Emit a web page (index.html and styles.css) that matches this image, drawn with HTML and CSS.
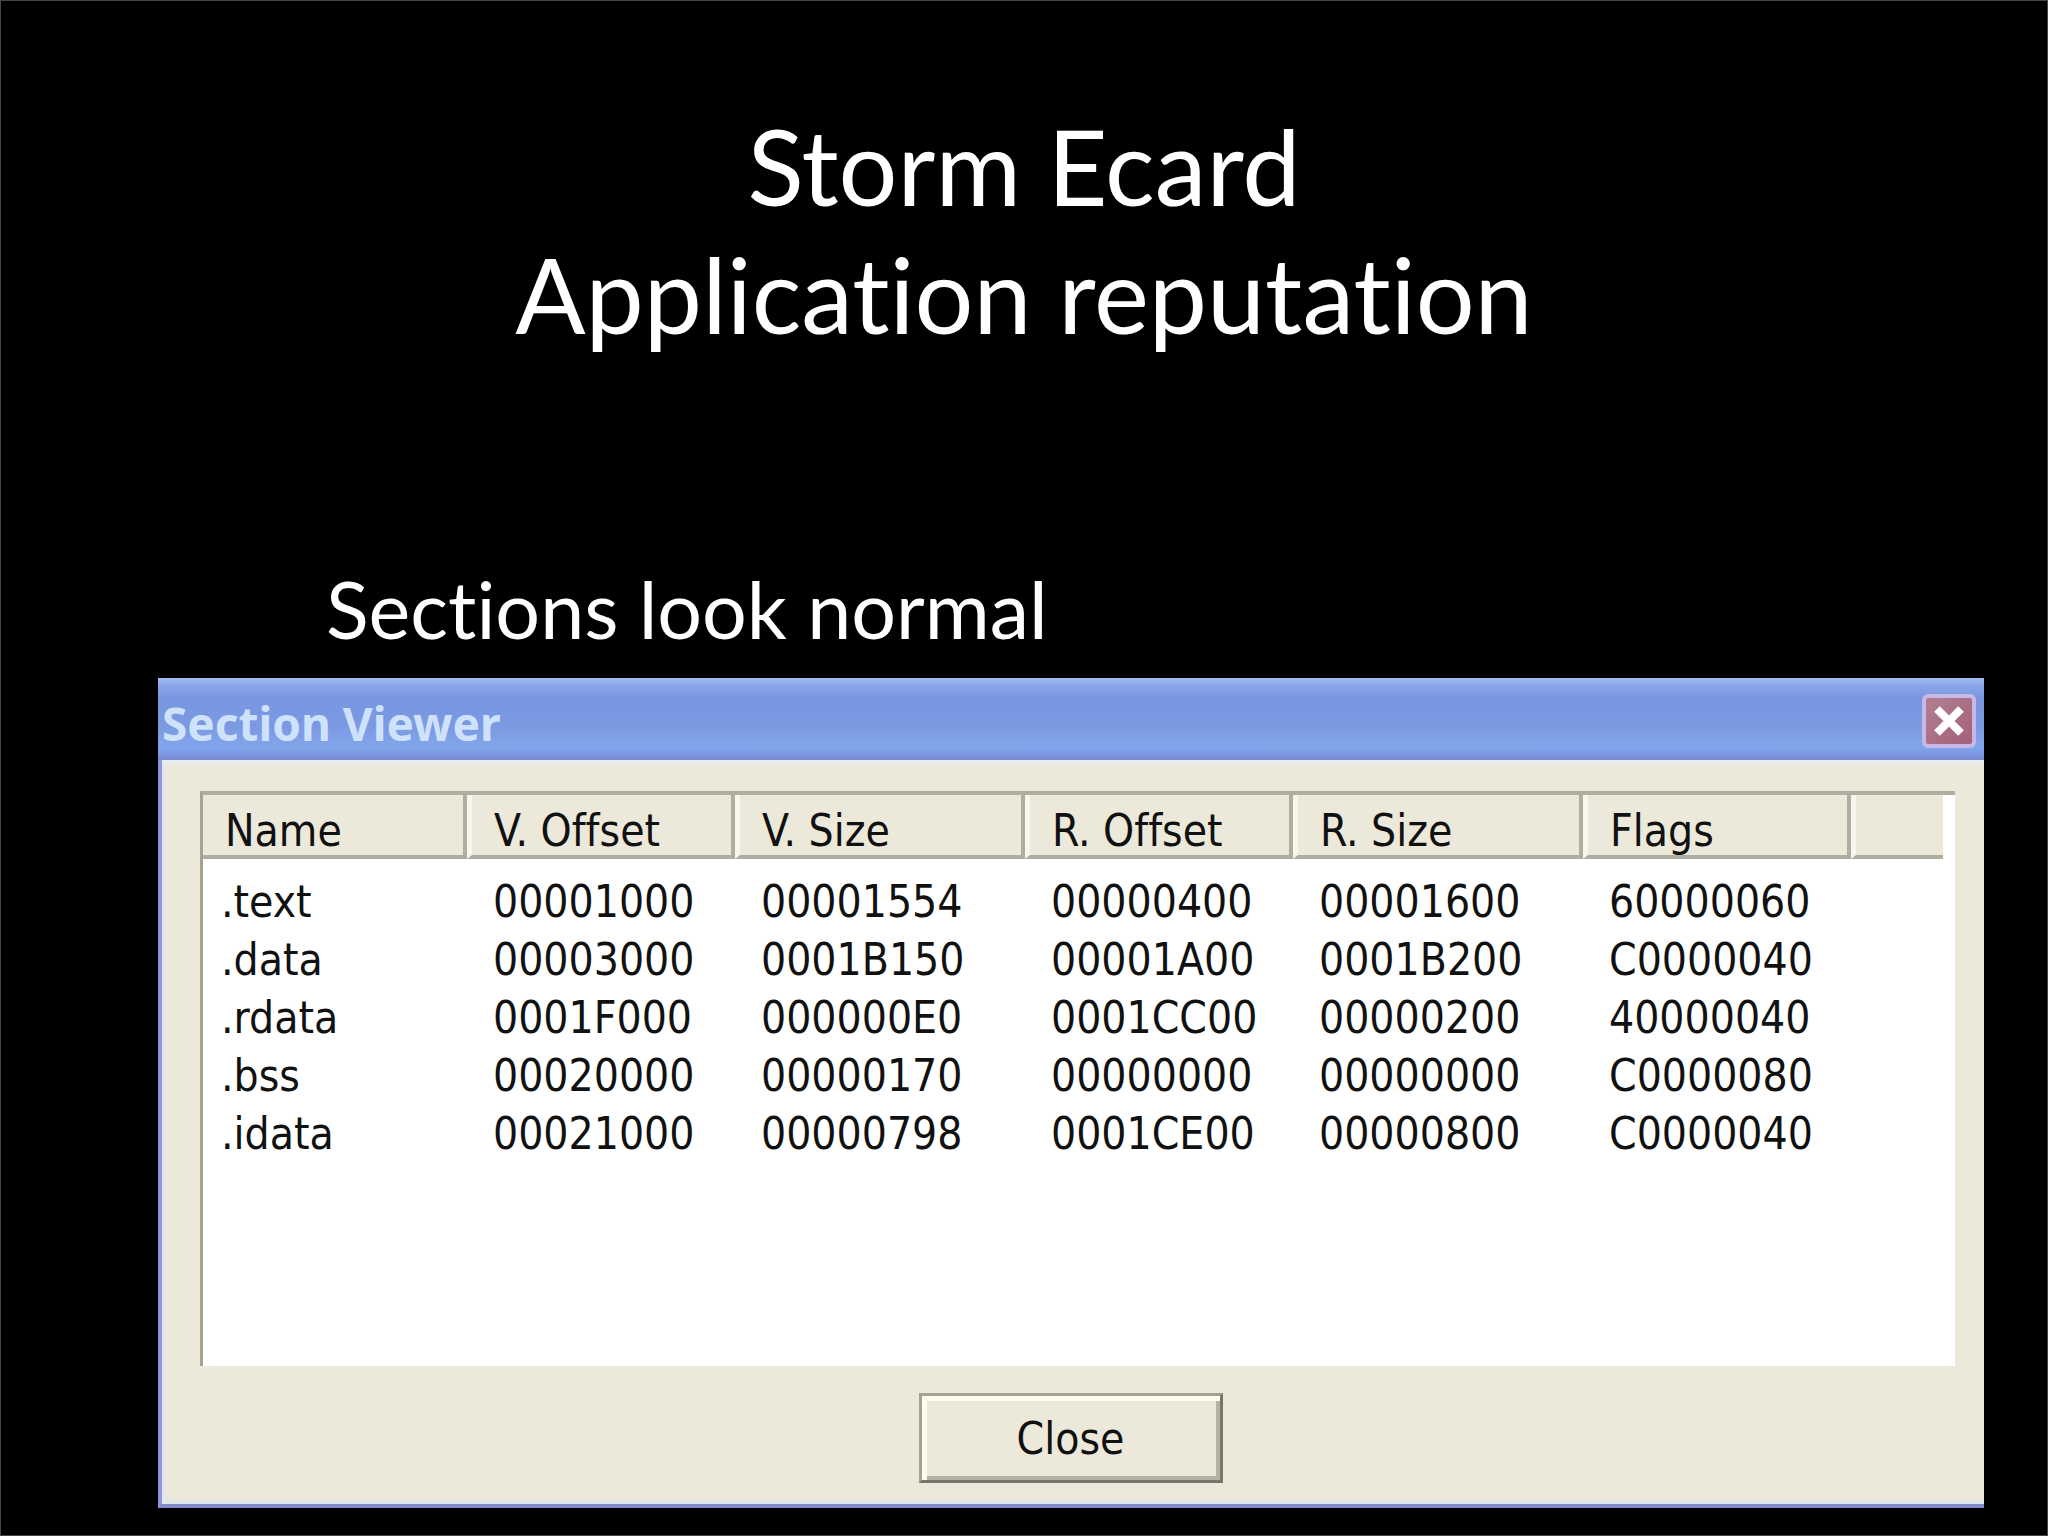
FILE: index.html
```html
<!DOCTYPE html>
<html lang="en">
<head>
<meta charset="utf-8">
<title>Storm Ecard</title>
<link rel="stylesheet" href="styles.css">
</head>
<body>
<main class="slide">
  <h1 class="slide-title">Storm Ecard<br>Application reputation</h1>
  <p class="slide-text">Sections look normal</p>
  <section class="window" aria-labelledby="window-title">
    <header class="titlebar">
      <h2 class="titlebar-text" id="window-title">Section Viewer</h2>
      <button class="titlebar-close" type="button" aria-label="Close window">
        <svg class="cross" viewBox="0 0 32 32" aria-hidden="true"><path d="M4 4L28 28M28 4L4 28"/></svg>
      </button>
    </header>
    <div class="window-body">
      <div class="list">
        <table class="sections">
          <colgroup>
            <col class="col-first"><col class="col-narrow"><col class="col-wide"><col class="col-narrow"><col class="col-wide"><col class="col-narrow"><col>
          </colgroup>
          <thead>
            <tr><th scope="col">Name</th><th scope="col">V. Offset</th><th scope="col">V. Size</th><th scope="col">R. Offset</th><th scope="col">R. Size</th><th scope="col">Flags</th><td></td></tr>
          </thead>
          <tbody>
            <tr><td>.text</td><td>00001000</td><td>00001554</td><td>00000400</td><td>00001600</td><td>60000060</td><td></td></tr>
            <tr><td>.data</td><td>00003000</td><td>0001B150</td><td>00001A00</td><td>0001B200</td><td>C0000040</td><td></td></tr>
            <tr><td>.rdata</td><td>0001F000</td><td>000000E0</td><td>0001CC00</td><td>00000200</td><td>40000040</td><td></td></tr>
            <tr><td>.bss</td><td>00020000</td><td>00000170</td><td>00000000</td><td>00000000</td><td>C0000080</td><td></td></tr>
            <tr><td>.idata</td><td>00021000</td><td>00000798</td><td>0001CE00</td><td>00000800</td><td>C0000040</td><td></td></tr>
          </tbody>
        </table>
      </div>
      <button class="close-button" type="button">Close</button>
    </div>
  </section>
</main>
</body>
</html>
```
FILE: styles.css
```css
* {
  box-sizing: border-box;
}

body {
  margin: 0;
  background: #000;
}

.slide {
  min-height: 100vh;
  padding: 101px 63px 26px 157px;
  border: 1px solid #474747;
  background: #000;
  color: #fff;
  font-family: Lato, "Gill Sans", sans-serif;
  font-variant-ligatures: none;
}

.slide-title {
  margin: 0 94px 0 0;
  font-size: 104px;
  font-weight: 400;
  line-height: 128px;
  text-align: center;
}

.slide-text {
  margin: 208px 0 26px 168px;
  font-size: 79px;
  line-height: 86px;
}

.window {
  border-bottom: 4px solid #838bc8;
  border-left: 4px solid #8f97d6;
  background: #ece9da;
  color: #111;
  font-family: "DejaVu Sans Condensed", "DejaVu Sans", Tahoma, sans-serif;
  font-size: 44px;
}

.titlebar {
  display: flex;
  align-items: center;
  justify-content: space-between;
  height: 82px;
  margin-left: -4px;
  padding: 0 8px 0 4px;
  background: linear-gradient(#a0bcf3 0, #8aa6e8 8px, #7996e0 20px, #7b9ae2 50px, #81a6ec 70px, #7b93df 78px, #8088cf 82px);
}

.titlebar-text {
  margin: 8px 0 0;
  color: #cfe2fb;
  font-family: "Noto Sans", Tahoma, sans-serif;
  font-size: 46px;
  font-weight: 700;
  line-height: 58px;
}

.titlebar-close {
  display: grid;
  place-items: center;
  width: 54px;
  height: 54px;
  margin-top: 4px;
  padding: 0;
  border: 4px solid #c8b8e8;
  border-radius: 6px;
  background: linear-gradient(135deg, #b08090, #a4607a);
}

.cross {
  width: 32px;
  height: 32px;
  fill: none;
  stroke: #fff;
  stroke-width: 8;
}

.window-body {
  display: flex;
  flex-direction: column;
  align-items: center;
  padding: 27px 29px 17px 34px;
  border-top: 4px solid #e8ecf0;
  border-left: 4px solid #e3e6f0;
  border-bottom: 4px solid #dfe8e8;
}

.list {
  align-self: stretch;
  height: 575px;
  padding-right: 12px;
  border-top: 4px solid #b0ae9e;
  border-left: 3px solid #a5a394;
  background: #fff;
}

.sections {
  width: 100%;
  border-collapse: separate;
  border-spacing: 0;
  table-layout: fixed;
}

.col-first {
  width: 264px;
}

.col-narrow {
  width: 268px;
}

.col-wide {
  width: 290px;
}

.sections thead th,
.sections thead td {
  height: 64px;
  padding: 12px 0 0 22px;
  border-left: 5px solid #f8f7ee;
  border-right: 4px solid #b0ae9e;
  border-bottom: 4px solid #b0ae9e;
  background: #ece9da;
  font-weight: 400;
  line-height: 48px;
  text-align: left;
  white-space: nowrap;
}

.sections thead th:first-child {
  border-left: 0;
}

.sections thead td {
  border-right: 0;
}

.sections tbody td {
  height: 58px;
  padding: 0 0 0 26px;
  line-height: 58px;
  white-space: nowrap;
}

.sections tbody td:first-child {
  padding-left: 18px;
}

.sections tbody tr:first-child td {
  height: 72px;
  padding-top: 14px;
}

.close-button {
  width: 304px;
  height: 90px;
  margin: 27px 14px 0 0;
  padding: 0;
  border: 3px solid #a5a292;
  border-right-color: #77756a;
  border-bottom-color: #77756a;
  background: #ece9da;
  box-shadow: inset 5px 5px #fffdf0, inset -4px -4px #b5b2a2;
  color: #111;
  font: inherit;
}
```
